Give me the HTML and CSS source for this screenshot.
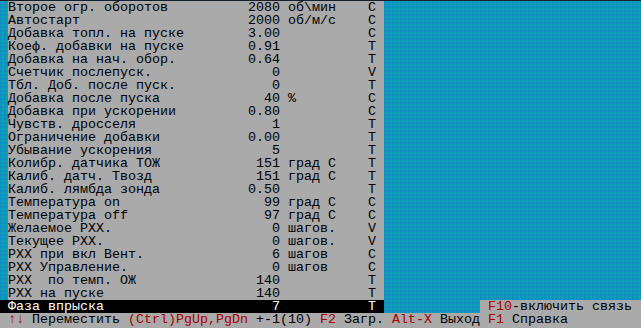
FILE: index.html
```html
<!DOCTYPE html>
<html lang="ru">
<head>
    <meta charset="UTF-8">
    <title>Параметры</title>
    <link rel="stylesheet" href="styles.css">
</head>
<body>
    <div class="screen">
        <div class="list">
            <div class="row"><span>Второе огр. оборотов</span><span class="val">2080</span><span></span><span>об\мин</span><span>C</span></div>
            <div class="row"><span>Автостарт</span><span class="val">2000</span><span></span><span>об/м/с</span><span>C</span></div>
            <div class="row"><span>Добавка топл. на пуске</span><span class="val">3.00</span><span></span><span></span><span>C</span></div>
            <div class="row"><span>Коеф. добавки на пуске</span><span class="val">0.91</span><span></span><span></span><span>T</span></div>
            <div class="row"><span>Добавка на нач. обор.</span><span class="val">0.64</span><span></span><span></span><span>T</span></div>
            <div class="row"><span>Счетчик послепуск.</span><span class="val">0</span><span></span><span></span><span>V</span></div>
            <div class="row"><span>Тбл. Доб. после пуск.</span><span class="val">0</span><span></span><span></span><span>T</span></div>
            <div class="row"><span>Добавка после пуска</span><span class="val">40</span><span></span><span>%</span><span>C</span></div>
            <div class="row"><span>Добавка при ускорении</span><span class="val">0.80</span><span></span><span></span><span>C</span></div>
            <div class="row"><span>Чувств. дросселя</span><span class="val">1</span><span></span><span></span><span>T</span></div>
            <div class="row"><span>Ограничение добавки</span><span class="val">0.00</span><span></span><span></span><span>T</span></div>
            <div class="row"><span>Убывание ускорения</span><span class="val">5</span><span></span><span></span><span>T</span></div>
            <div class="row"><span>Колибр. датчика ТОЖ</span><span class="val">151</span><span></span><span>град C</span><span>T</span></div>
            <div class="row"><span>Калиб. датч. Твозд</span><span class="val">151</span><span></span><span>град C</span><span>T</span></div>
            <div class="row"><span>Калиб. лямбда зонда</span><span class="val">0.50</span><span></span><span></span><span>T</span></div>
            <div class="row"><span>Температура on</span><span class="val">99</span><span></span><span>град C</span><span>C</span></div>
            <div class="row"><span>Температура off</span><span class="val">97</span><span></span><span>град C</span><span>C</span></div>
            <div class="row"><span>Желаемое РХХ.</span><span class="val">0</span><span></span><span>шагов.</span><span>V</span></div>
            <div class="row"><span>Текущее РХХ.</span><span class="val">0</span><span></span><span>шагов.</span><span>V</span></div>
            <div class="row"><span>РХХ при вкл Вент.</span><span class="val">6</span><span></span><span>шагов</span><span>C</span></div>
            <div class="row"><span>РХХ Управление.</span><span class="val">0</span><span></span><span>шагов</span><span>C</span></div>
            <div class="row"><span>РХХ  по темп. ОЖ</span><span class="val">140</span><span></span><span></span><span>T</span></div>
            <div class="row"><span>РХХ на пуске</span><span class="val">140</span><span></span><span></span><span>T</span></div>
            <div class="last-line">
                <div class="row sel"><span>Фаза впрыска</span><span class="val">7</span><span></span><span></span><span>T</span></div>
                <div class="hint"><span class="key">F10</span>-включить связь</div>
            </div>
        </div>
        <div class="status"><span class="key">↑↓</span> Переместить <span class="key">(Ctrl)PgUp,PgDn</span> +-1(10) <span class="key">F2</span> Загр. <span class="key">Alt-X</span> Выход <span class="key">F1</span> Справка</div>
    </div>
</body>
</html>
```

FILE: styles.css
```css
body { margin: 0; background: #0c9cb6; font-family: "Liberation Mono", "DejaVu Sans Mono", monospace; font-size: 13.33px; line-height: 13px; color: #000; }
.screen { width: 641px; height: 328px; border-top: 1px solid #14202c; box-sizing: border-box; display: flex; flex-direction: column;
    background-color: #08a2b0;
    background-image: repeating-linear-gradient(90deg, rgba(30,120,220,0.35) 0 2px, transparent 2px 4px),
                      repeating-linear-gradient(0deg, rgba(30,120,220,0.25) 0 2px, transparent 2px 4px); }
.list { flex: none; }
.row { display: grid; grid-template-columns: 224px 48px 8px 80px 8px 8px; width: 376px; margin-left: 8px; height: 13px; background: #aaaaaa; white-space: pre; }
.row .val { text-align: right; }
.last-line { display: flex; justify-content: space-between; height: 13px; }
.row.sel { margin-left: 0; padding-left: 8px; background: #000; color: #fff; }
.hint { width: 161px; padding-left: 8px; box-sizing: border-box; background: #aaaaaa; white-space: pre; }
.key { color: #a80000; }
.status { flex: 1; background: #aaaaaa; padding-left: 8px; white-space: pre; }
```
